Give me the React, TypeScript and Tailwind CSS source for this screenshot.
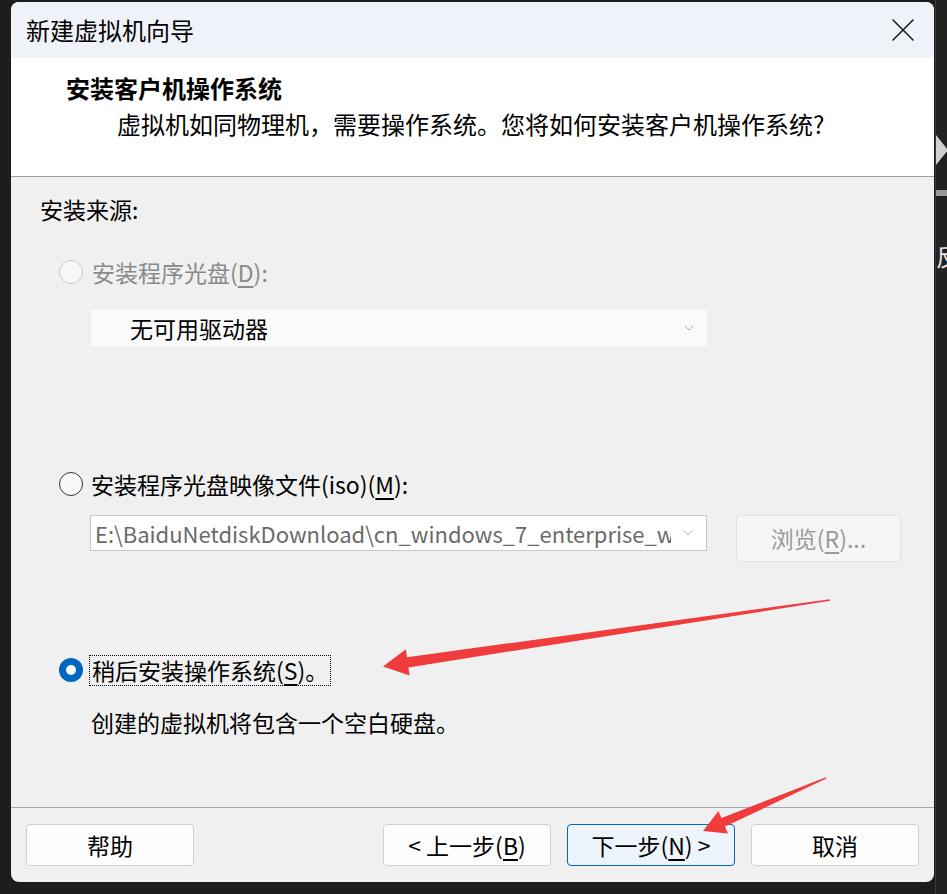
import { X, ChevronDown } from "lucide-react";

const font = { fontFamily: '"Noto Sans CJK SC", "Noto Sans", sans-serif' };

type RadioProps = { checked?: boolean; disabled?: boolean };

const Radio = ({ checked, disabled }: RadioProps) => {
  if (checked) {
    return (
      <span className="w-[24px] h-[24px] rounded-full bg-[#0067c0] flex items-center justify-center shrink-0">
        <span className="w-[10px] h-[10px] rounded-full bg-white" />
      </span>
    );
  }
  return (
    <span
      className={`w-[24px] h-[24px] rounded-full bg-[#f7f7f7] border-[1.5px] shrink-0 ${
        disabled ? "border-[#c6c6c6]" : "border-[#333333]"
      }`}
    />
  );
};

const FooterButton = ({
  children,
  primary,
}: {
  children: React.ReactNode;
  primary?: boolean;
}) => (
  <button
    className={`w-[168px] h-[42px] rounded-[4px] border text-[23px] leading-none text-black flex items-center justify-center ${
      primary
        ? "bg-[#eef4fc] border-[#0067c0]"
        : "bg-[#fdfdfd] border-[#d0d0d0]"
    }`}
  >
    {children}
  </button>
);

const App = () => {
  return (
    <div
      className="relative w-[947px] h-[894px] bg-[#1d1d1d] flex overflow-hidden"
      style={font}
    >
      <div className="pl-[11px] pt-[2px]">
        <div className="w-[923px] h-[880px] rounded-[8px] bg-[#f0f0f0] flex flex-col overflow-hidden">
          {/* title bar */}
          <div className="h-[56px] bg-[#eff2f8] flex items-center justify-between pl-[15px] pr-[11px] shrink-0">
            <span className="text-[24px] leading-none text-black">
              新建虚拟机向导
            </span>
            <X size={40} strokeWidth={0.95} className="text-[#1a1a1a]" />
          </div>

          {/* header */}
          <div className="h-[119px] bg-white border-b border-[#a0a0a0] pl-[55px] pt-[14px] shrink-0">
            <p className="text-[24px] leading-[32px] font-bold text-black">
              安装客户机操作系统
            </p>
            <p className="text-[24px] leading-[32px] text-black ml-[51px] mt-[4px]">
              虚拟机如同物理机，需要操作系统。您将如何安装客户机操作系统?
            </p>
          </div>

          {/* body */}
          <div className="h-[630px] flex flex-col pl-[29px] pt-[16px] text-[23px] text-black shrink-0">
            <p className="leading-[32px]">安装来源:</p>

            <div className="flex items-center gap-[9px] h-[32px] mt-[31px] ml-[19px]">
              <Radio disabled />
              <span className="text-[#8a8a8a] leading-none">
                安装程序光盘(<u className="underline-offset-4">D</u>):
              </span>
            </div>

            <div className="mt-[22px] ml-[51px] w-[616px] h-[36px] bg-[#fafafa] flex items-center justify-between pl-[39px] pr-[10px]">
              <span className="leading-none">无可用驱动器</span>
              <ChevronDown size={16} strokeWidth={1.2} className="text-[#9a9a9a]" />
            </div>

            <div className="flex items-center gap-[8px] h-[32px] mt-[122px] ml-[19px]">
              <Radio />
              <span className="leading-none">
                安装程序光盘映像文件(iso)(<u className="underline-offset-4">M</u>):
              </span>
            </div>

            <div className="flex items-start mt-[15px] ml-[50px] gap-[29px]">
              <div className="w-[617px] h-[36px] bg-white border border-[#c8c8c8] flex items-center pl-[4px] pr-[10px]">
                <span className="w-[576px] overflow-hidden whitespace-nowrap text-[#6a6a6a] leading-[32px] text-[22px]">
                  E:\BaiduNetdiskDownload\cn_windows_7_enterprise_with_sp1_x64_dvd.iso
                </span>
                <ChevronDown size={16} strokeWidth={1.2} className="text-[#9a9a9a] ml-auto" />
              </div>
              <button className="w-[165px] h-[47px] rounded-[4px] bg-[#f6f6f6] border border-[#e3e3e3] text-[#9a9a9a] leading-none flex items-center justify-center">
                浏览(<u className="underline-offset-4">R</u>)...
              </button>
            </div>

            <div className="flex items-center gap-[6px] h-[32px] mt-[92px] ml-[19px]">
              <Radio checked />
              <span className="h-[31px] px-[2px] border border-dotted border-black flex items-center leading-none">
                稍后安装操作系统(<u className="underline-offset-4">S</u>)。
              </span>
            </div>

            <p className="leading-[32px] mt-[20px] ml-[51px]">
              创建的虚拟机将包含一个空白硬盘。
            </p>
          </div>

          {/* footer */}
          <div className="flex-1 border-t border-[#a8a8a8] flex items-start pt-[16px] px-[15px]">
            <FooterButton>帮助</FooterButton>
            <div className="ml-auto flex gap-[16px]">
              <FooterButton>
                &lt; 上一步(<u className="underline-offset-4">B</u>)
              </FooterButton>
              <FooterButton primary>
                下一步(<u className="underline-offset-4">N</u>) &gt;
              </FooterButton>
              <FooterButton>取消</FooterButton>
            </div>
          </div>
        </div>
      </div>

      {/* background window peeking out on the right */}
      <div className="ml-[1px] w-[12px] h-full border-l border-[#3a3a3a] bg-[#222222] flex flex-col overflow-hidden">
        <svg width="12" height="30" viewBox="0 0 12 30" className="mt-[135px]">
          <path d="M0 0 L12 15 L0 30 Z" fill="#d0d0d0" />
        </svg>
        <div className="mt-[25px] h-[6px] bg-[#9a9a9a]" />
        <span className="mt-[48px] text-[24px] leading-none text-[#e6e6e6] whitespace-nowrap">
          反
        </span>
      </div>

      {/* red annotation arrows */}
      <svg
        className="absolute inset-0 pointer-events-none"
        width="947"
        height="894"
        viewBox="0 0 947 894"
      >
        <polygon
          points="830,599.3 407,657.2 405.8,649.2 383,666.5 409.6,675.4 408.4,667.4 830,600.8"
          fill="#f03c3c"
        />
        <polygon
          points="826,777.3 721.4,818 718.4,811.1 703,831 728,833.4 725,826.6 826.4,778.6"
          fill="#f03c3c"
        />
      </svg>
    </div>
  );
};

export default App;
